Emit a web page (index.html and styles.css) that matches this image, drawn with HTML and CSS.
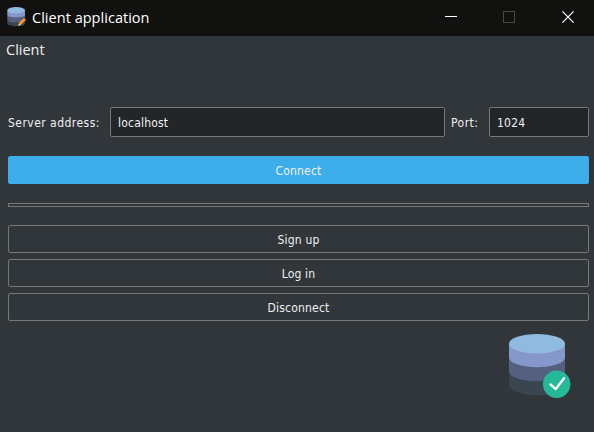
FILE: index.html
```html
<!DOCTYPE html>
<html lang="en">
<head>
<meta charset="utf-8">
<title>Client application</title>
<link rel="stylesheet" href="styles.css">
</head>
<body>
<header class="titlebar">
  <svg class="app-icon" width="20" height="20" viewBox="0 0 20 20">
    <path fill="#394650" d="M.3 13v3.500c0 3.600 17.700 3.600 17.700 0V13z"/>
    <path fill="#556080" d="M.3 8v5c0 3.200 17.700 3.200 17.700 0V8z"/>
    <path fill="#8697cb" d="M.3 3.200V8c0 3.200 17.700 3.200 17.700 0V3.200z"/>
    <ellipse cx="9.150" cy="3.200" rx="8.850" ry="3.100" fill="#91bae1"/>
    <path d="M11.500 18.500l1-3.200 4.200-4 2 2-4.500 4.300z" fill="#ef9c2c"/>
    <path d="M16.200 11.700l1.200-1 1.900 1.900-1.200 1.200z" fill="#d65a50"/>
    <path d="M11.200 19l.9-2.800 1.800 1.700z" fill="#efd2ae"/>
  </svg>
  <h1 class="title">Client application</h1>
  <div class="controls">
    <svg width="12" height="12"><path d="M0 5.500h12" stroke="#fff"/></svg>
    <svg width="12" height="12"><rect x=".5" y=".5" width="11" height="11" fill="none" stroke="#484847"/></svg>
    <svg width="12" height="12"><path d="M.4.400l11.200 11.200M11.600.400L.4 11.600" stroke="#fff" stroke-width="1.200"/></svg>
  </div>
</header>
<nav class="menubar"><span class="menu">Client</span></nav>
<main class="content">
  <form class="connection">
    <label class="label address-label" for="address">Server address:</label>
    <input class="field address" id="address" value="localhost">
    <label class="label port-label" for="port">Port:</label>
    <input class="field port" id="port" value="1024">
  </form>
  <button class="button primary">Connect</button>
  <div class="separator"></div>
  <div class="actions">
    <button class="button">Sign up</button>
    <button class="button">Log in</button>
    <button class="button">Disconnect</button>
  </div>
  <div class="status">
    <svg width="62" height="65" viewBox="0 0 62 65">
      <path fill="#394650" d="M0 37v14.500A28 9.700 0 0 0 56 51.500V37z"/>
      <path fill="#556080" d="M0 23v14.500A28 9.700 0 0 0 56 37.500V23z"/>
      <path fill="#8697cb" d="M0 10v13.500A28 9.700 0 0 0 56 23.500V10z"/>
      <ellipse cx="28" cy="9.700" rx="28" ry="9.700" fill="#91bae1"/>
      <circle cx="47.700" cy="50.300" r="13.700" fill="#26b999"/>
      <path d="M41.500 50.400l5.200 4.700 8.300-10.900" fill="none" stroke="#fff" stroke-width="2.300" stroke-linecap="round" stroke-linejoin="round"/>
    </svg>
  </div>
</main>
</body>
</html>
```
FILE: styles.css
```css
* { box-sizing: border-box; }
body {
  margin: 0;
  height: 432px;
  overflow: hidden;
  background: #31363b;
  color: #eff0f1;
  font: 12px/16px "DejaVu Sans Condensed", "DejaVu Sans", sans-serif;
  letter-spacing: .2px;
}
.titlebar {
  display: flex;
  align-items: center;
  height: 36px;
  padding: 0 20px 2px 7px;
  background: #11120f;
}
.app-icon { margin-right: 5px; }
.title {
  margin: 0;
  padding-top: 1px;
  color: #fff;
  font: 14.5px/20px "Open Sans", sans-serif;
  letter-spacing: .03px;
}
.controls { display: flex; gap: 47px; margin-left: auto; }
.controls svg:first-child { margin-right: -1px; }
.menubar {
  height: 28px;
  padding: 4px 6px;
  font: 14.5px/20px "Open Sans", sans-serif;
  letter-spacing: 0;
}
.content { padding: 43px 5px 0 8px; }
.connection { display: flex; height: 30px; align-items: center; }
.label { flex: none; padding-top: 2px; white-space: nowrap; letter-spacing: .47px; }
.address-label { width: 102px; }
.port-label { width: 38px; margin-left: 6px; }
.field {
  height: 30px;
  padding: 2px 7px 0;
  border: 1px solid #76797c;
  border-radius: 2px;
  background: #232629;
  color: #eff0f1;
  font: inherit;
  letter-spacing: .2px;
  outline: none;
}
.address { width: 335px; }
.port { width: 100px; }
.button {
  display: block;
  width: 100%;
  height: 28px;
  padding: 2px 0 0;
  border: 1px solid #76797c;
  border-radius: 2px;
  background: #31363b;
  color: #eff0f1;
  font: inherit;
  letter-spacing: .2px;
}
.primary { margin-top: 19px; border-color: #3daee9; background: #3daee9; }
.separator { height: 4px; margin: 19px 0 18px; border: 1px solid #76797c; }
.actions { display: grid; gap: 6px; }
.status { display: flex; justify-content: flex-end; padding: 13px 18px 0 0; }
```
